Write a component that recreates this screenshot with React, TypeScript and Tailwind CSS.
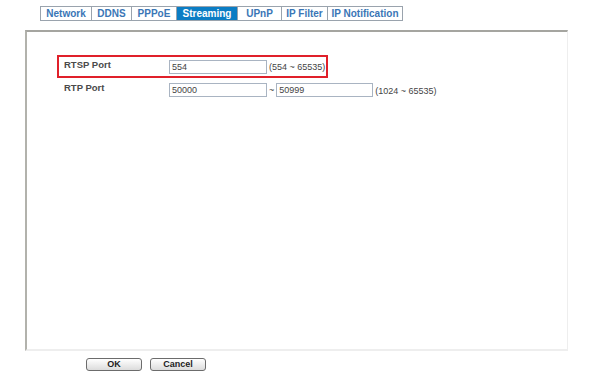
const tabs = ["Network", "DDNS", "PPPoE", "Streaming", "UPnP", "IP Filter", "IP Notification"]
const widths = ["w-[52px]", "w-[40px]", "w-[45px]", "w-[61px]", "w-[44px]", "w-[46px]", "w-[75px]"]

function Field({ value, w }: { value: string; w: string }) {
  return (
    <div className={`${w} h-[14px] border border-[#a9b4c2] bg-white pl-[2px] text-[9px] leading-[12px] text-[#444]`}>
      {value}
    </div>
  )
}

export default function App() {
  return (
    <div className="w-[593px] h-[373px] bg-white font-['Liberation_Sans',Arial,sans-serif] overflow-hidden">
      {/* tab strip */}
      <div className="flex pl-[40px] pt-[6px]">
        {tabs.map((t, i) => (
          <div
            key={t}
            className={`${widths[i]} h-[15px] flex items-center justify-center text-[10px] font-bold border border-[#9aa3ad] ${i > 0 ? "border-l-0" : ""} ${
              t === "Streaming" ? "bg-[#0b7dc4] text-white" : "bg-white text-[#3a76b6]"
            }`}
          >
            {t}
          </div>
        ))}
      </div>

      {/* panel */}
      <div className="ml-[25px] mt-[9px] w-[543px] h-[321px] border-t-2 border-l-2 border-t-[#a5a5a0] border-l-[#b2b2ac] border-r border-b-2 border-r-[#eeeeee] border-b-[#eeeeee] pt-[23px]">
        <div className="ml-[30px] w-[271px] h-[23px] border-2 border-[#e0202a] flex items-center pl-[5px]">
          <div className="w-[105px] text-[9.5px] font-bold text-[#4a4a4a] pb-[2px]">RTSP Port</div>
          <Field value="554" w="w-[98px]" />
          <span className="ml-[2px] text-[9px] text-[#444] mt-[2px]">(554 ~ 65535)</span>
        </div>
        <div className="ml-[37px] mt-[3px] flex items-center">
          <div className="w-[105px] text-[9.5px] font-bold text-[#4a4a4a] mb-[4px]">RTP Port</div>
          <Field value="50000" w="w-[98px]" />
          <span className="mx-[2px] text-[9px] text-[#444] mt-[2px]">~</span>
          <Field value="50999" w="w-[97px]" />
          <span className="ml-[2px] text-[9px] text-[#444] mt-[3px]">(1024 ~ 65535)</span>
        </div>
      </div>

      {/* buttons */}
      <div className="flex gap-[8px] pl-[86px] mt-[7px]">
        <button className="w-[56px] h-[13px] rounded-[3px] border border-[#6c6c6c] bg-gradient-to-b from-white to-[#dcdcdc] text-[9px] font-bold leading-[11px] text-[#222]">
          OK
        </button>
        <button className="w-[56px] h-[13px] rounded-[3px] border border-[#6c6c6c] bg-gradient-to-b from-white to-[#dcdcdc] text-[9px] font-bold leading-[11px] text-[#222]">
          Cancel
        </button>
      </div>
    </div>
  )
}
